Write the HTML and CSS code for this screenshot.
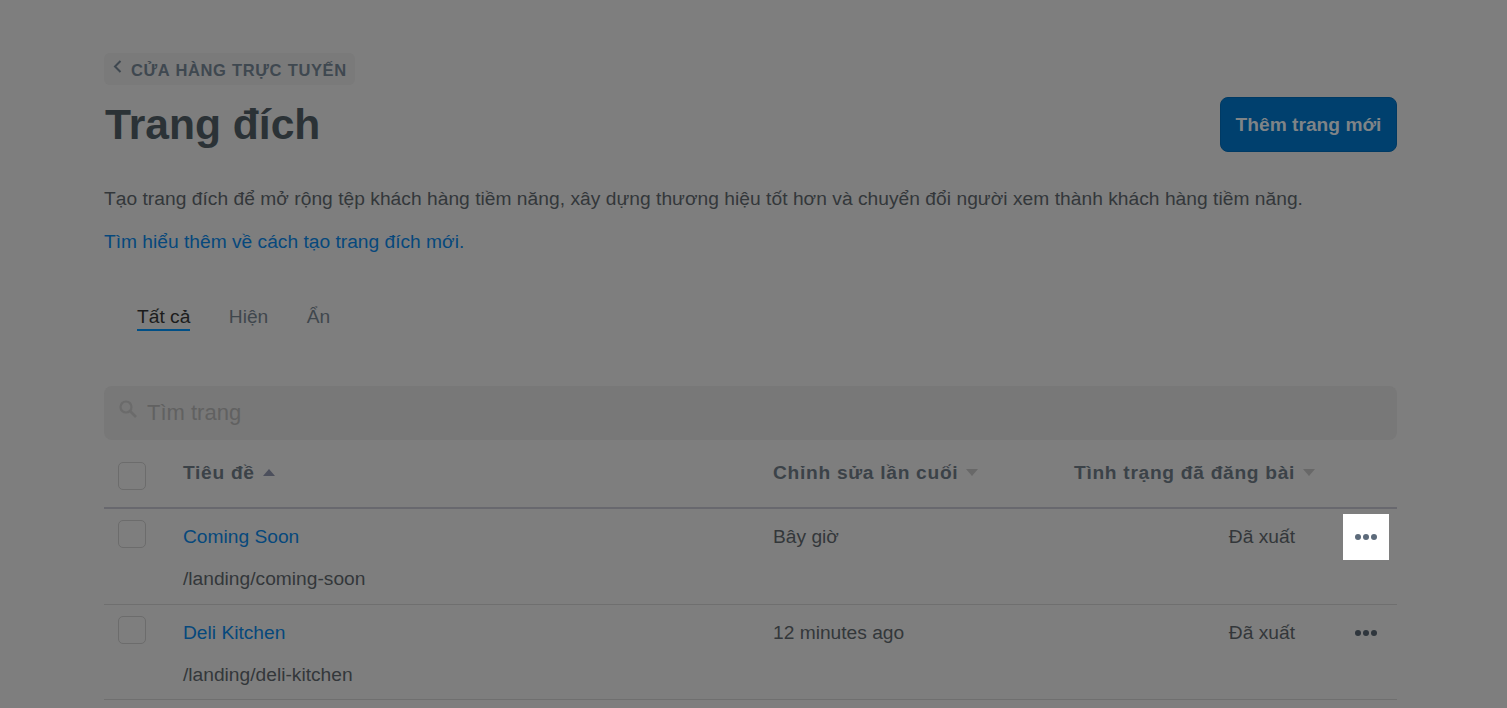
FILE: index.html

```html
<!DOCTYPE html>
<html lang="vi">
<head>
    <meta charset="UTF-8">
    <meta name="viewport" content="width=device-width, initial-scale=1.0">
    <title>Trang đích</title>
    <link rel="stylesheet" href="styles.css">
</head>
<body>
    <div class="page">
        <a class="breadcrumb" href="#">
            <svg class="back-icon" width="10" height="14" viewBox="0 0 10 14"><path d="M8.5 1 L3 6.5 L8.5 12" fill="none" stroke="#3f4850" stroke-width="2"/></svg>
            <span>Cửa hàng trực tuyến</span>
        </a>

        <div class="page-header">
            <h1>Trang đích</h1>
            <button class="btn-primary">Thêm trang mới</button>
        </div>

        <p class="intro">Tạo trang đích để mở rộng tệp khách hàng tiềm năng, xây dựng thương hiệu tốt hơn và chuyển đổi người xem thành khách hàng tiềm năng.</p>
        <p class="learn-more"><a href="#">Tìm hiểu thêm về cách tạo trang đích mới.</a></p>

        <!-- Tabs -->
        <div class="tabs">
            <a class="tab active" href="#">Tất cả</a>
            <a class="tab" href="#">Hiện</a>
            <a class="tab" href="#">Ẩn</a>
        </div>

        <!-- Search -->
        <div class="search">
            <svg width="20" height="20" viewBox="0 0 20 20"><circle cx="8" cy="8" r="5.5" fill="none" stroke="#6b6b6b" stroke-width="2.2"/><path d="M12 12 L18 18" stroke="#6b6b6b" stroke-width="2.6"/></svg>
            <span class="search-text">Tìm trang</span>
        </div>

        <!-- Table -->
        <div class="row row-head">
            <span class="check"></span>
            <span class="head-cell">Tiêu đề <i class="caret up"></i></span>
            <span class="head-cell">Chỉnh sửa lần cuối <i class="caret down"></i></span>
            <span class="head-cell">Tình trạng đã đăng bài <i class="caret down"></i></span>
        </div>

        <div class="row">
            <span class="check"></span>
            <div class="title-cell">
                <a href="#">Coming Soon</a>
                <p>/landing/coming-soon</p>
            </div>
            <span class="cell">Bây giờ</span>
            <span class="cell status">Đã xuất</span>
            <button class="more focused"><i></i><i></i><i></i></button>
        </div>

        <div class="row">
            <span class="check"></span>
            <div class="title-cell">
                <a href="#">Deli Kitchen</a>
                <p>/landing/deli-kitchen</p>
            </div>
            <span class="cell">12 minutes ago</span>
            <span class="cell status">Đã xuất</span>
            <button class="more"><i></i><i></i><i></i></button>
        </div>
    </div>
</body>
</html>
```

FILE: styles.css

```css
html, body {
    height: 100%;
    overflow: hidden;
}
body {
    margin: 0;
    background-color: #7e7e7e;
    font-family: 'Liberation Sans', Arial, sans-serif;
    font-size: 19.2px;
    color: #33373a;
}
a {
    text-decoration: none;
}
.page {
    width: 1293px;
    margin-left: 104px;
    padding-top: 53px;
}
.breadcrumb {
    display: inline-flex;
    align-items: flex-start;
    height: 32px;
    padding: 0 8px;
    box-sizing: border-box;
    width: 251px;
    background: #7a7a7a;
    border-radius: 6px;
    color: #3f4850;
    font-size: 16.5px;
    font-weight: bold;
    letter-spacing: .6px;
    word-spacing: .5px;
    text-transform: uppercase;
    line-height: 35px;
}
.back-icon {
    margin: 7px 9px 0 0;
    flex: none;
}
.page-header {
    display: flex;
    justify-content: space-between;
    align-items: flex-start;
    margin-top: 12px;
}
h1 {
    margin: 0 0 0 1px;
    font-size: 42.6px;
    line-height: 55px;
    color: #2b3236;
}
.btn-primary {
    width: 177px;
    height: 55px;
    border: 1px solid #003a64;
    border-radius: 8px;
    background: #00406e;
    color: #7f8487;
    font-family: inherit;
    font-size: 19.2px;
    font-weight: bold;
}
.intro {
    margin: 33px 0 0;
    line-height: 28px;
    letter-spacing: .03px;
}
.learn-more {
    margin: 15px 0 0;
    line-height: 28px;
}
.learn-more a {
    color: #06487c;
}
.tabs {
    display: flex;
    gap: 38.5px;
    margin-top: 47px;
    padding-left: 33px;
    height: 83px;
}
.tab {
    height: 26px;
    line-height: 27px;
    color: #40474d;
}
.tab.active {
    color: #1c1c1c;
    border-bottom: 2px solid #004f86;
}
.search {
    display: flex;
    align-items: center;
    height: 54px;
    padding-left: 14px;
    background: #787878;
    border-radius: 8px;
}
.search svg {
    margin: -9px 9px 0 0;
}
.search-text {
    font-size: 22px;
    color: #616161;
}
.row {
    display: grid;
    grid-template-columns: 79px 590px 301px 221px 48px;
    height: 95px;
    border-bottom: 1px solid #6f6f6f;
    align-items: start;
}
.row:last-child {
    height: 94px;
}
.row-head {
    height: 67px;
    border-bottom: 2px solid #68686e;
    grid-template-columns: 79px 590px 301px 1fr;
}
.check {
    width: 26px;
    height: 26px;
    margin: 11px 0 0 14px;
    border: 1px solid #6c6c6c;
    border-radius: 5px;
}
.row-head .check {
    margin-top: 22px;
}
.head-cell {
    margin-top: 21px;
    line-height: 24px;
    font-weight: bold;
    letter-spacing: .7px;
    color: #3b4248;
}
.caret {
    display: inline-block;
    margin-left: 2px;
    border-left: 6px solid transparent;
    border-right: 6px solid transparent;
    vertical-align: 3px;
}
.caret.up {
    border-bottom: 7px solid #4c4f5c;
}
.caret.down {
    border-top: 7px solid #686868;
}
.title-cell a {
    display: block;
    margin-top: 15px;
    line-height: 26px;
    color: #06487c;
}
.title-cell p {
    margin: 16px 0 0;
    line-height: 26px;
}
.cell {
    margin-top: 15px;
    line-height: 26px;
}
.status {
    text-align: right;
}
.more {
    display: flex;
    align-items: center;
    justify-content: center;
    gap: 2px;
    width: 46px;
    height: 46px;
    margin: 5px 0 0 48px;
    padding: 0;
    border: none;
    background: none;
}
.more i {
    width: 6px;
    height: 6px;
    border-radius: 50%;
    background: #2f363d;
}
.more.focused {
    background: #fff;
}
.more.focused i {
    background: #5d6b7b;
}
```
